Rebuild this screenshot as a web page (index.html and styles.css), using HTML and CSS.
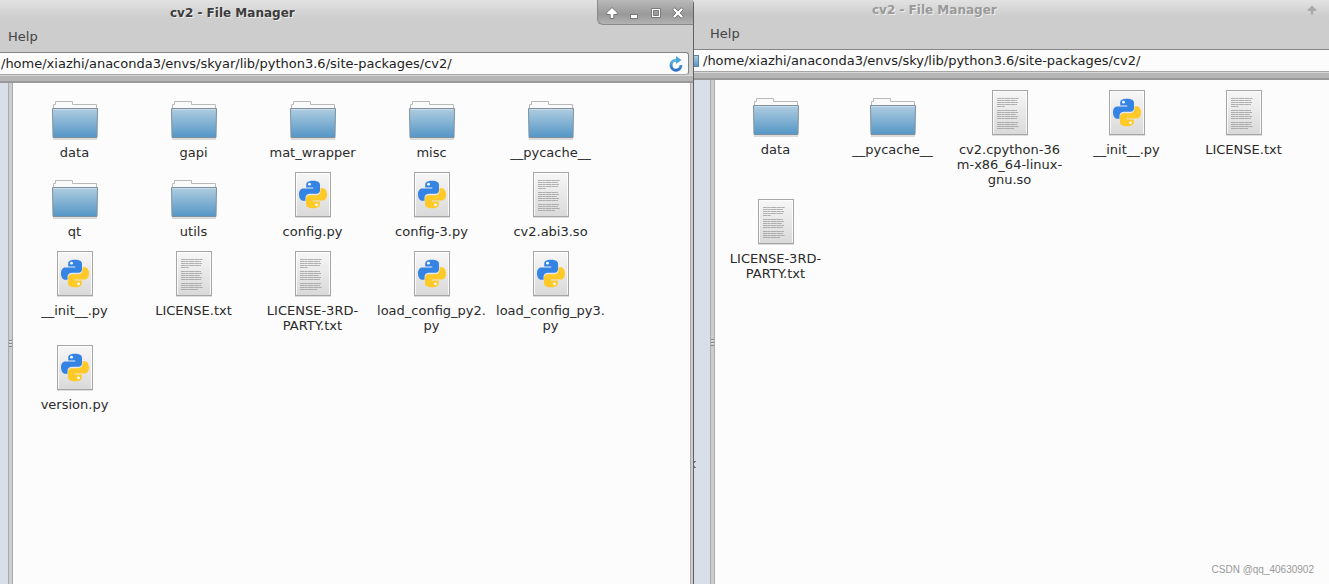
FILE: index.html
```html
<!DOCTYPE html>
<html lang="en">
<head>
<meta charset="utf-8">
<title>cv2 - File Manager</title>
<link rel="stylesheet" href="styles.css">
</head>
<body>
<svg class="symbols" aria-hidden="true">
  <defs>
    <linearGradient id="blue" x1="0" y1="0" x2="0" y2="1"><stop offset="0" stop-color="#b0cde0"/><stop offset="1" stop-color="#5496c6"/></linearGradient>
    <linearGradient id="paper" x1="0" y1="0" x2="0" y2="1"><stop offset="0" stop-color="#f7f7f7"/><stop offset="1" stop-color="#d9d9d9"/></linearGradient>
    <linearGradient id="swirl" x1="0" y1="0" x2="0" y2="1"><stop offset="0" stop-color="#5cb8e0"/><stop offset="1" stop-color="#2f6fc4"/></linearGradient>
    <symbol id="folder" viewBox="0 0 48 48">
      <path d="M2 47h44" stroke="#000" stroke-opacity=".13" stroke-width="2"/>
      <path d="M2.500 18V12.500H4.500V9.500H21.500V12.500H45.500V18" fill="#fafafa" stroke="#b9b9b9"/>
      <path d="M1.500 16.500H46.500L46 45.500H2z" fill="url(#blue)" stroke="#7f919e"/>
      <path d="M2.500 17.500H45.500" stroke="#c6dcea"/>
    </symbol>
    <symbol id="text" viewBox="0 0 48 48">
      <path d="M6 46.500H42" stroke="#000" stroke-opacity=".12"/>
      <rect x="6.500" y="1.500" width="35" height="44" fill="url(#paper)" stroke="#a6a6a6"/>
      <path d="M7.500 44.500V2.500H40.500V44.500" fill="none" stroke="#fff" stroke-opacity=".8"/>
      <path d="M11 9.500H33M11 11.500H31M11 13.500H32M11 15.500H31M11 17.500H19M11 21.500H31M11 23.500H32M11 25.500H30M11 27.500H32M11 29.500H31M11 33.500H32M11 35.500H31M11 37.500H33M11 39.500H28" stroke="#999" stroke-opacity=".75" stroke-dasharray="4 .3 3 .3 6 .3"/>
    </symbol>
    <symbol id="python" viewBox="0 0 48 48">
      <path d="M6 46.500H42" stroke="#000" stroke-opacity=".12"/>
      <rect x="6.500" y="1.500" width="35" height="44" fill="url(#paper)" stroke="#a6a6a6"/>
      <path d="M7.500 44.500V2.500H40.500V44.500" fill="none" stroke="#fff" stroke-opacity=".8"/>
      <g id="snake"><path d="M24 9.700C19 9.700 17.200 11.300 17.200 13.700V16.500H24.300V17.400H14.300C11.500 17.400 10 19.800 10 23.400C10 27 11.800 29.700 14.200 29.700H16.500V26.700C16.500 24.200 18.700 22.700 21 22.700H27.500C29.600 22.700 31 21.200 31 19.200V13.700C31 11.300 28.800 9.700 24 9.700z" fill="#3584e4"/><circle cx="20.500" cy="13.200" r="1.400" fill="#fff"/></g>
      <g transform="rotate(180 24 23.500)"><path d="M24 9.700C19 9.700 17.200 11.300 17.200 13.700V16.500H24.300V17.400H14.300C11.500 17.400 10 19.800 10 23.400C10 27 11.800 29.700 14.200 29.700H16.500V26.700C16.500 24.200 18.700 22.700 21 22.700H27.500C29.600 22.700 31 21.200 31 19.200V13.700C31 11.300 28.800 9.700 24 9.700z" fill="#ffc928"/><circle cx="20.500" cy="13.200" r="1.400" fill="#fff"/></g>
    </symbol>
    <symbol id="up" viewBox="0 0 10 10"><path d="M5 .5L.8 4.500V6H3.800V9.500H6.200V6H9.200V4.500z"/></symbol>
  </defs>
</svg>
<main class="desktop">
  <section class="window window-left" aria-label="skyar cv2">
    <header class="titlebar"><h1 class="title">cv2 - File Manager</h1>
      <div class="controls">
        <button class="control" aria-label="Roll up"><svg width="12" height="12"><path d="M6 .5L.8 5.500V7.500H4.200V11.500H7.800V7.500H11.200V5.500z"/></svg></button>
        <button class="control" aria-label="Minimize"><svg width="12" height="12"><rect x="2.500" y="7.500" width="7" height="4"/></svg></button>
        <button class="control" aria-label="Maximize"><svg width="12" height="12"><path d="M1.500 1.500H10.500V10.500H1.500zM3.500 3.500V8.500H8.500V3.500z" fill-rule="evenodd"/></svg></button>
        <button class="control" aria-label="Close"><svg width="12" height="12"><path d="M.7 2.700L2.700 .7L6 3.900L9.300 .7L11.300 2.700L8.100 6L11.300 9.300L9.300 11.300L6 8.100L2.700 11.300L.7 9.300L3.900 6z"/></svg></button>
      </div>
    </header>
    <nav class="menu"><button class="menu-item">Help</button></nav>
    <div class="location">
      <input class="path" aria-label="Location" value="/home/xiazhi/anaconda3/envs/skyar/lib/python3.6/site-packages/cv2/">
      <button class="reload" aria-label="Reload"><svg width="16" height="16" viewBox="0 0 16 16"><path d="M9 4.200H7.500A5 5 0 1 0 13 9" fill="none" stroke="url(#swirl)" stroke-width="3"/><path d="M8 0L13.500 4L8 8z" fill="#4aa7d9"/></svg></button>
    </div>
    <div class="divider"></div>
    <div class="body">
      <aside class="sidebar"></aside>
      <div class="sash"><span class="grip"></span></div>
      <ul class="files">
        <li class="file"><svg class="icon"><use href="#folder"/></svg><span>data</span></li>
        <li class="file"><svg class="icon"><use href="#folder"/></svg><span>gapi</span></li>
        <li class="file"><svg class="icon"><use href="#folder"/></svg><span>mat_wrapper</span></li>
        <li class="file"><svg class="icon"><use href="#folder"/></svg><span>misc</span></li>
        <li class="file"><svg class="icon"><use href="#folder"/></svg><span>__pycache__</span></li>
        <li class="file"><svg class="icon"><use href="#folder"/></svg><span>qt</span></li>
        <li class="file"><svg class="icon"><use href="#folder"/></svg><span>utils</span></li>
        <li class="file"><svg class="icon"><use href="#python"/></svg><span>config.py</span></li>
        <li class="file"><svg class="icon"><use href="#python"/></svg><span>config-3.py</span></li>
        <li class="file"><svg class="icon"><use href="#text"/></svg><span>cv2.abi3.so</span></li>
        <li class="file"><svg class="icon"><use href="#python"/></svg><span>__init__.py</span></li>
        <li class="file"><svg class="icon"><use href="#text"/></svg><span>LICENSE.txt</span></li>
        <li class="file"><svg class="icon"><use href="#text"/></svg><span>LICENSE-3RD-<br>PARTY.txt</span></li>
        <li class="file"><svg class="icon"><use href="#python"/></svg><span>load_config_py2.<br>py</span></li>
        <li class="file"><svg class="icon"><use href="#python"/></svg><span>load_config_py3.<br>py</span></li>
        <li class="file"><svg class="icon"><use href="#python"/></svg><span>version.py</span></li>
      </ul>
      <div class="edge"></div>
    </div>
  </section>
  <section class="window window-right" aria-label="sky cv2">
    <header class="titlebar"><h1 class="title">cv2 - File Manager</h1>
      <button class="control" aria-label="Roll up"><svg width="10" height="10"><use href="#up"/></svg></button>
    </header>
    <nav class="menu"><button class="menu-item">Help</button></nav>
    <div class="location">
      <svg class="mini-folder" width="5" height="14"><rect x="-3" y="1.500" width="7.500" height="11" fill="url(#blue)" stroke="#60839c"/></svg>
      <input class="path" aria-label="Location" value="/home/xiazhi/anaconda3/envs/sky/lib/python3.6/site-packages/cv2/">
    </div>
    <div class="divider"></div>
    <div class="body">
      <aside class="sidebar"><svg class="sliver" width="2" height="8"><path d="M0 .5H2M0 1.500H1M0 5.500H1M0 6.500H2" stroke="#777"/></svg></aside>
      <div class="sash"><span class="grip"></span></div>
      <ul class="files">
        <li class="file"><svg class="icon"><use href="#folder"/></svg><span>data</span></li>
        <li class="file"><svg class="icon"><use href="#folder"/></svg><span>__pycache__</span></li>
        <li class="file"><svg class="icon"><use href="#text"/></svg><span>cv2.cpython-36<br>m-x86_64-linux-<br>gnu.so</span></li>
        <li class="file"><svg class="icon"><use href="#python"/></svg><span>__init__.py</span></li>
        <li class="file"><svg class="icon"><use href="#text"/></svg><span>LICENSE.txt</span></li>
        <li class="file"><svg class="icon"><use href="#text"/></svg><span>LICENSE-3RD-<br>PARTY.txt</span></li>
      </ul>
    </div>
  </section>
  <p class="watermark">CSDN @qq_40630902</p>
</main>
</body>
</html>
```
FILE: styles.css
```css
* { box-sizing: border-box; }
body { margin: 0; font: 13px/15px "DejaVu Sans", sans-serif; color: #2a2a2a; }
button { border: 0; padding: 0; background: none; font: inherit; color: inherit; }
.symbols { position: absolute; width: 0; height: 0; }
.desktop { position: relative; display: grid; grid-template-columns: 694fr 635fr; min-height: 100vh; overflow: hidden; background: #dcdcdc; }
.window { display: flex; flex-direction: column; min-width: 0; background: #cdcdcd; }
.window-left { border-right: 1px solid #606060; border-top-right-radius: 4px; overflow: hidden; }
.titlebar { display: flex; justify-content: space-between; align-items: flex-start; height: 25px; background: linear-gradient(#e2e2e2, #cecece 70%, #cdcdcd); }
.title { margin: 0; padding: 6px 0 0 170px; font-size: 12px; line-height: 15px; font-weight: bold; color: #3c3c3c; text-shadow: 1px 1px #eee; }
.controls { display: flex; align-items: center; gap: 10px; height: 25px; padding: 1px 9px 0 8px; border: 1px solid #8a8a8a; border-width: 0 0 1px 1px; border-bottom-left-radius: 6px; background: linear-gradient(#b9b9b9, #999 60%, #b2b2b2); }
.control { display: flex; fill: #fff; stroke: #787878; stroke-width: 1; }
.menu { height: 27px; padding: 4px 8px 0; }
.menu-item { color: #444; }
.location { display: flex; align-items: center; height: 23px; background: #fcfcfc; border: 1px solid #858585; border-left: 0; border-bottom-color: #a5a5a5; border-radius: 0 3px 3px 0; }
.window-left .location { margin-right: 4px; padding-right: 4px; }
.path { flex: 1; min-width: 0; padding: 0 0 0 1px; border: 0; outline: 0; background: none; font: inherit; color: #222; }
.reload { display: flex; }
.divider { height: 8px; border-top: 1px solid #d8d8d8; border-bottom: 2px solid #999; background: #b6b6b6; }
.body { flex: 1; display: flex; }
.sidebar { flex: 0 0 8px; background: #d9dfe8; }
.sash { display: flex; align-items: center; flex: 0 0 5px; border: 1px solid #aaa; border-width: 0 1px; background: #cdcdcd; }
.grip { width: 3px; height: 7px; margin-top: 20px; background: linear-gradient(#888 1px, #e2e2e2 1px, #e2e2e2 2px, #cdcdcd 2px); background-size: 3px 3px; }
.files { flex: 1; display: grid; grid-template-columns: repeat(auto-fill, 119px); align-content: start; row-gap: 11px; margin: 0; padding: 9px 0 0 2px; list-style: none; background: #fcfcfc; }
.file { display: flex; flex-direction: column; align-items: center; gap: 5px; text-align: center; }
.icon { width: 48px; height: 48px; }
.edge { flex: 0 0 3px; border-left: 1px solid #aaa; background: #cdcdcd; }
.window-right .titlebar { height: 22px; }
.window-right .title { padding: 3px 0 0 178px; color: #999; }
.window-right .titlebar .control { margin: 5px 12px 0 0; fill: #aaa; stroke: none; }
.window-right .menu { padding-left: 16px; }
.window-right .location { border-right: 0; border-radius: 0; }
.window-right .path { padding-left: 4px; }
.window-right .sidebar { position: relative; flex-basis: 16px; }
.window-right .files { grid-template-columns: repeat(auto-fill, 117px); }
.sliver { position: absolute; left: 0; top: 381px; }
.watermark { position: absolute; right: 15px; bottom: 7px; margin: 0; font: 10px/15px "Liberation Sans", sans-serif; color: #999; }
```
